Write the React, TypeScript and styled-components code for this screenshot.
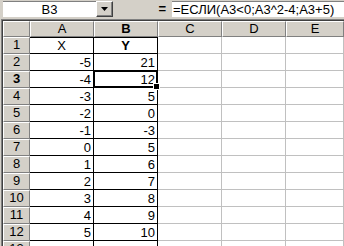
import { createGlobalStyle } from 'styled-components';
import styled from 'styled-components';

const GlobalStyle = createGlobalStyle`
	html, body {
		margin: 0;
		padding: 0;
		width: 344px;
		height: 246px;
		overflow: hidden;
		background: #d4d0c8;
	}
	* {
		box-sizing: border-box;
	}
`;

const rows: [number, number][] = [
	[-5, 21],
	[-4, 12],
	[-3, 5],
	[-2, 0],
	[-1, -3],
	[0, 5],
	[1, 6],
	[2, 7],
	[3, 8],
	[4, 9],
	[5, 10],
];

const columns = ['A', 'B', 'C', 'D', 'E'];

export default function App() {
	return (
		<Page>
			<GlobalStyle />
			<FormulaBar>
				<NameBox>B3</NameBox>
				<DropBtn>
					<svg width="7" height="4" viewBox="0 0 7 4">
						<path d="M0 0h7L3.5 4z" fill="#000" />
					</svg>
				</DropBtn>
				<EqLabel>=</EqLabel>
				<FormulaBox>=ЕСЛИ(A3&lt;0;A3^2-4;A3+5)</FormulaBox>
			</FormulaBar>

			<Frame>
				<Grid>
					<Header />
					{columns.map((c) => (
						<Header key={c} $bold={c === 'B'}>
							{c}
						</Header>
					))}

					<Header>1</Header>
					<Cell $dark $center $top>
						X
					</Cell>
					<Cell $dark $center $top $bold>
						Y
					</Cell>
					<Cell />
					<Cell />
					<Cell />

					{rows.map(([x, y], i) => {
						const n = i + 2;
						return (
							<Row key={n}>
								<Header $bold={n === 3}>{n}</Header>
								<Cell $dark>{x}</Cell>
								<Cell $dark $selected={n === 3}>
									{y}
									{n === 3 && (
										<Selection>
											<Handle />
										</Selection>
									)}
								</Cell>
								<Cell />
								<Cell />
								<Cell />
							</Row>
						);
					})}

					<Header>13</Header>
					<Cell $dark />
					<Cell $dark />
					<Cell />
					<Cell />
					<Cell />
				</Grid>
			</Frame>
		</Page>
	);
}

const Page = styled.div`
	width: 344px;
	height: 246px;
	background: #d4d0c8;
	font-family: 'Liberation Sans', Arial, sans-serif;
	font-size: 13px;
	color: #000;
	overflow: hidden;
`;

const FormulaBar = styled.div`
	display: flex;
	align-items: stretch;
	height: 18px;
	padding: 1px 0 0 3px;
`;

const NameBox = styled.div`
	width: 93px;
	height: 16px;
	background: #fff;
	border-top: 1px solid #808080;
	line-height: 15px;
	text-align: center;
`;

const DropBtn = styled.div`
	width: 17px;
	height: 16px;
	background: #d4d0c8;
	border-top: 1px solid #fff;
	border-left: 1px solid #fff;
	border-right: 1px solid #404040;
	border-bottom: 1px solid #404040;
	box-shadow: inset -1px -1px 0 #808080;
	display: flex;
	align-items: center;
	justify-content: center;
`;

const EqLabel = styled.div`
	width: 59px;
	text-align: right;
	padding-right: 6px;
	font-weight: bold;
	line-height: 16px;
`;

const FormulaBox = styled.div`
	flex: 1;
	height: 16px;
	background: #fff;
	border-top: 1px solid #808080;
	padding-left: 1px;
	line-height: 15px;
	white-space: nowrap;
	overflow: hidden;
`;

const Frame = styled.div`
	margin: 1px 0 0 1px;
	border-top: 1px solid #808080;
	border-left: 1px solid #808080;
`;

const Grid = styled.div`
	display: grid;
	grid-template-columns: 27px repeat(4, 64px) 1fr;
	grid-template-rows: 16px;
	grid-auto-rows: 17px;
	border-top: 1px solid #404040;
	border-left: 1px solid #404040;
	background: #fff;
`;

const Row = styled.div`
	display: contents;
`;

const Header = styled.div<{ $bold?: boolean }>`
	background: #d4d0c8;
	border-top: 1px solid #fff;
	border-left: 1px solid #fff;
	border-right: 1px solid #808080;
	border-bottom: 1px solid #808080;
	text-align: center;
	line-height: 14px;
	font-weight: ${({ $bold }) => ($bold ? 'bold' : 'normal')};
`;

const Cell = styled.div<{
	$dark?: boolean;
	$center?: boolean;
	$top?: boolean;
	$bold?: boolean;
	$selected?: boolean;
}>`
	position: relative;
	background: #fff;
	border-right: 1px solid ${({ $dark }) => ($dark ? '#000' : '#c0c0c0')};
	border-bottom: 1px solid ${({ $dark }) => ($dark ? '#000' : '#c0c0c0')};
	box-shadow: ${({ $top }) => ($top ? 'inset 0 1px 0 #000' : 'none')};
	text-align: ${({ $center }) => ($center ? 'center' : 'right')};
	padding: 1px 2px 0 2px;
	line-height: 15px;
	font-weight: ${({ $bold }) => ($bold ? 'bold' : 'normal')};
	z-index: ${({ $selected }) => ($selected ? 1 : 0)};
`;

const Selection = styled.div`
	position: absolute;
	top: -1px;
	left: -1px;
	right: -1px;
	bottom: -1px;
	border: 2px solid #000;
	pointer-events: none;
`;

const Handle = styled.div`
	position: absolute;
	right: -4px;
	bottom: -4px;
	width: 5px;
	height: 5px;
	background: #000;
	border: 1px solid #fff;
	box-sizing: content-box;
`;
